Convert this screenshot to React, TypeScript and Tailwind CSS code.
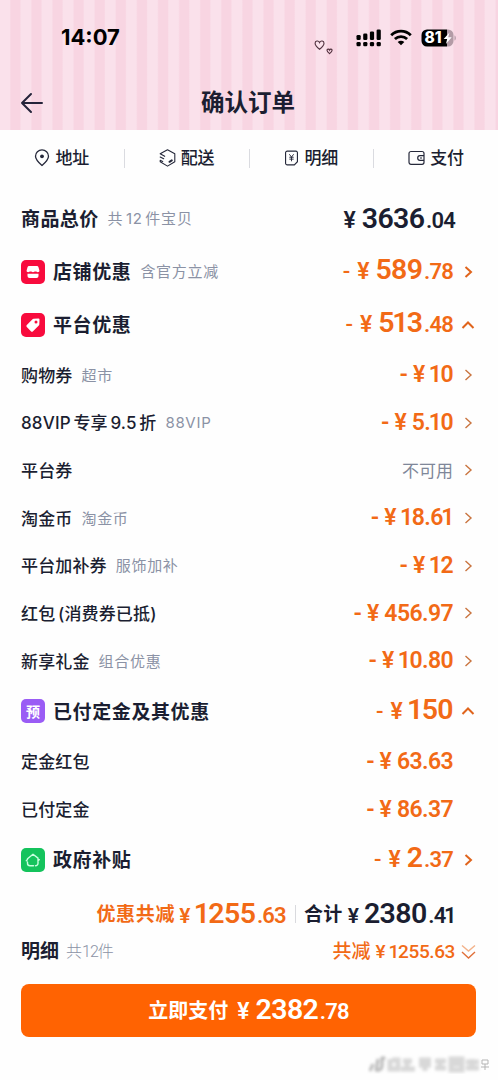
import type { ReactNode } from "react";
import clsx from "clsx";

type Arrow = "right" | "up" | "none";

interface Item {
  label: string;
  note?: string;
  amount?: string;
  arrow: Arrow;
}

const coupons: Item[] = [
  { label: "购物券", note: "超市", amount: "10", arrow: "right" },
  { label: "88VIP 专享 9.5 折", note: "88VIP", amount: "5.10", arrow: "right" },
  { label: "平台券", arrow: "right" },
  { label: "淘金币", note: "淘金币", amount: "18.61", arrow: "right" },
  { label: "平台加补券", note: "服饰加补", amount: "12", arrow: "right" },
  { label: "红包 (消费券已抵)", amount: "456.97", arrow: "right" },
  { label: "新享礼金", note: "组合优惠", amount: "10.80", arrow: "right" },
];

const deposits: Item[] = [
  { label: "定金红包", amount: "63.63", arrow: "none" },
  { label: "已付定金", amount: "86.37", arrow: "none" },
];

function Chevron({ arrow, bold }: { arrow: Arrow; bold?: boolean }) {
  return (
    <span className="ml-[7px] flex w-4 shrink-0 justify-center">
      {arrow !== "none" && (
        <svg width="16" height="16" viewBox="0 0 16 16" fill="none" stroke={bold ? "#e0641c" : "#c9743f"} strokeWidth={bold ? 2 : 1.4}>
          {arrow === "right" ? <path d="M5.500 3l5.500 5-5.500 5" /> : <path d="M2.500 11L8 5.500l5.500 5.500" />}
        </svg>
      )}
    </span>
  );
}

// Proportional figures: the "1" takes less room than the other digits
function Digits({ value }: { value: string }) {
  return value.split("").map((char, i) => (
    <span key={i} className={char === "1" ? "-ml-[0.06em] -mr-[0.04em]" : undefined}>
      {char}
    </span>
  ));
}

interface PriceProps {
  value: string;
  minus?: boolean;
  tight?: boolean;
  className?: string;
}

// Large integer part followed by smaller decimals
function Price({ value, minus, tight, className }: PriceProps) {
  const [whole, cents] = value.split(".");
  return (
    <span className={clsx("flex items-baseline whitespace-nowrap font-['Roboto',sans-serif] font-semibold leading-none", className)}>
      {minus && <span className="mr-[7px] text-[22px] font-medium">-</span>}
      <span className={tight ? "mr-[5px] text-[21px]" : "mr-[6px] text-[23px]"}>¥</span>
      <span className="text-[28.500px] tracking-[-0.6px]">
        <Digits value={whole} />
      </span>
      {cents && (
        <span className="ml-[1.5px] text-[22px] tracking-[-0.8px]">
          .<Digits value={cents} />
        </span>
      )}
    </span>
  );
}

function SectionRow({ icon, label, note, amount, arrow }: Item & { icon: ReactNode }) {
  return (
    <div className="flex h-[53px] items-center">
      {icon}
      <span className="ml-2 pt-[3px] text-[19px] font-bold tracking-[0.6px]">{label}</span>
      {note && <span className="ml-[9px] pt-[2px] text-[15px] tracking-[0.7px] text-[#8b92a5]">{note}</span>}
      <Price value={amount ?? ""} minus className="ml-auto pb-[2px] text-[#f26a16]" />
      <Chevron arrow={arrow} bold />
    </div>
  );
}

function ItemRow({ label, note, amount, arrow }: Item) {
  return (
    <div className="flex h-[47.7px] items-center">
      <span className="pt-[3px] text-[17px] font-medium tracking-[0.15px] [word-spacing:-2px]">{label}</span>
      {note && <span className="ml-[9px] pt-[2px] text-[15px] tracking-[0.7px] text-[#8b92a5]">{note}</span>}
      {amount ? (
        <span className="ml-auto flex items-baseline font-['Roboto',sans-serif] text-[23px] font-semibold leading-none text-[#f26a16]">
          <span className="mr-[5px]">-</span>
          <span className="mr-[5px]">¥</span>
          <span className="tracking-[-0.6px]">
            <Digits value={amount} />
          </span>
        </span>
      ) : (
        <span className="ml-auto pt-[3px] text-[17px] text-[#7f8799]">不可用</span>
      )}
      <Chevron arrow={arrow} />
    </div>
  );
}

function StatusBar() {
  return (
    <div className="flex h-[75px] items-center pl-[61px] pr-[41px]">
      <span className="font-['Inter',sans-serif] text-[22px] font-bold text-black">14:07</span>
      <svg className="ml-auto mt-[18px]" width="20" height="16" viewBox="0 0 18 14" fill="none" stroke="#51323f" strokeWidth="1">
        <path d="M5 9C2.500 7 1 5.500 1 3.600 1 1.300 4 .8 5 3c1-2.200 4-1.700 4 .6C9 5.500 7.500 7 5 9z" />
        <path d="M14 13c-1.500-1.200-2.300-2-2.300-3 0-1.400 1.800-1.500 2.300-.3.500-1.200 2.300-1.100 2.300.3 0 1-.8 1.800-2.300 3z" />
      </svg>
      <svg className="ml-[22px]" width="26" height="18" viewBox="0 0 26 18" fill="#000">
        <rect x="0.500" y="6" width="4.200" height="5" rx="1.300" />
        <rect x="7.200" y="4.500" width="4.200" height="6.500" rx="1.300" />
        <rect x="13.900" y="2.500" width="4.200" height="8.500" rx="1.300" />
        <rect x="20.600" y="0.500" width="4.200" height="10.500" rx="1.300" />
        <rect x="0.500" y="13" width="4.200" height="4.200" rx="1.300" />
        <rect x="7.200" y="13" width="4.200" height="4.200" rx="1.300" />
        <rect x="13.900" y="13" width="4.200" height="4.200" rx="1.300" />
        <rect x="20.600" y="13" width="4.200" height="4.200" rx="1.300" />
      </svg>
      <svg className="ml-2" width="22" height="17" viewBox="0 0 22 17" fill="none" stroke="#000" strokeWidth="2.800">
        <path d="M1.200 6.200c5.600-5.400 14-5.400 19.600 0" />
        <path d="M4.900 10c3.500-3.200 8.700-3.200 12.200 0" />
        <path d="M11 16.300l-3.300-3.400c1.900-1.600 4.700-1.600 6.600 0z" fill="#000" stroke="none" />
      </svg>
      <svg className="ml-[9px]" width="36" height="18" viewBox="0 0 36 18">
        <path d="M6 .5h20v17H6a5.500 5.500 0 0 1-5.500-5.500V6A5.500 5.500 0 0 1 6 .5z" fill="#000" />
        <path d="M26 .5h1A5.500 5.500 0 0 1 32.500 6v6a5.500 5.500 0 0 1-5.500 5.500h-1z" fill="#b39ba6" />
        <path d="M33.500 6.500c1.800.6 1.800 4.400 0 5z" fill="#b39ba6" />
        <text x="3.500" y="14.300" fontSize="15.500" fontWeight="800" fontFamily="Inter, sans-serif" fill="#fff">
          81
        </text>
        <path d="M28.500 3.500l-5.800 6.500h3.500l-1.300 5 5.800-6.700h-3.500z" fill="#fff" />
      </svg>
    </div>
  );
}

function Tab({ icon, label }: { icon: ReactNode; label: string }) {
  return (
    <div className="flex flex-1 items-center justify-center gap-[5px] text-[17px] font-medium">
      {icon}
      <span className="pt-[2px]">{label}</span>
    </div>
  );
}

function Divider() {
  return <span className="h-[19px] w-px bg-[#dadbe0]" />;
}

const badge = "flex size-6 shrink-0 items-center justify-center rounded-[5px]";

export default function App() {
  return (
    <div className="flex h-[1080px] w-[498px] flex-col overflow-hidden bg-[#fefefe] font-['Inter','Noto_Sans_CJK_SC',sans-serif] text-[#1b1e31]">
      <header className="h-[130px] shrink-0 bg-[repeating-linear-gradient(90deg,#fae1eb_0px,#fae1eb_9.500px,#f8d5e2_11px,#f8d5e2_19.800px,#fae1eb_21.100px)]">
        <StatusBar />
        <div className="flex h-[55px] items-center px-[20px]">
          <svg width="24" height="22" viewBox="0 0 24 22" fill="none" stroke="#25243a" strokeWidth="2" strokeLinecap="round" strokeLinejoin="round">
            <path d="M22 11H2M11 2L2 11l9 9" />
          </svg>
          <h1 className="flex-1 pr-[26px] pt-px text-center text-[23.500px] font-bold">确认订单</h1>
        </div>
      </header>

      <nav className="flex h-[56px] shrink-0 items-center">
        <Tab
          label="地址"
          icon={
            <svg width="16" height="18" viewBox="0 0 16 18" fill="none" stroke="#25283a" strokeWidth="1.300">
              <path d="M8 16.500C4 13 1.500 10.300 1.500 7.200a6.500 6.300 0 0 1 13 0c0 3.100-2.500 5.800-6.500 9.300z" />
              <circle cx="8" cy="7.300" r="1.900" fill="#25283a" stroke="none" />
            </svg>
          }
        />
        <Divider />
        <Tab
          label="配送"
          icon={
            <svg width="17" height="18" viewBox="0 0 17 18" fill="none" stroke="#25283a" strokeWidth="1.100" strokeLinejoin="round" strokeLinecap="round">
              <path d="M1.200 4.800l7.300-4 7.300 4v8l-7.300 4.300-7.300-4.300v-1M1.200 4.800l4.500 2.500M1.200 8l3.500 1.800M1.200 11.300l2.500 1.200" />
              <path d="M10.500 12.800l2.300-1.400" strokeWidth="2" />
            </svg>
          }
        />
        <Divider />
        <Tab
          label="明细"
          icon={
            <svg width="15" height="16" viewBox="0 0 15 17" fill="none" stroke="#25283a" strokeWidth="1.200">
              <path d="M3 1.200h9.200a1.600 1.600 0 0 1 1.600 1.600v9.700l-3.300 3.300H3a1.800 1.800 0 0 1-1.800-1.800V3A1.800 1.800 0 0 1 3 1.200z" />
              <path d="M5.200 4.500l2.300 3 2.300-3M7.500 7.500V12M5.200 7.700h4.600M5.200 9.700h4.600" strokeWidth="1" />
            </svg>
          }
        />
        <Divider />
        <Tab
          label="支付"
          icon={
            <svg width="17" height="16" viewBox="0 0 17 16" fill="none" stroke="#25283a" strokeWidth="1.200">
              <rect x="1" y="1.500" width="15" height="12.800" rx="2" />
              <path d="M16 5.700h-4a2.300 2.300 0 0 0 0 4.600h4M12 8h2" />
            </svg>
          }
        />
      </nav>

      <main className="flex flex-col pl-[21px] pr-[22px] pt-[6px]">
        <div className="flex h-[53px] items-center">
          <span className="pt-[3px] text-[19px] font-bold tracking-[0.4px]">商品总价</span>
          <span className="ml-[9px] pt-[2px] text-[15px] tracking-[0.8px] text-[#8b92a5] [word-spacing:-2.500px]">共 12 件宝贝</span>
          <Price value="3636.04" className="ml-auto mr-[21px] pt-px" />
        </div>

        <SectionRow
          label="店铺优惠"
          note="含官方立减"
          amount="589.78"
          arrow="right"
          icon={
            <span className={clsx(badge, "bg-[#f80b3d]")}>
              <svg width="14" height="14" viewBox="0 0 14 14" fill="#fff">
                <path d="M3 1h8a1.500 1.500 0 0 1 1.400 1l1 3.500c.2 1-.6 1.700-1.600 1.700-.9 0-1.300-.7-2.400-.7s-1.300.7-2.400.7-1.300-.7-2.400-.7-1.500.7-2.400.7C1.200 7.200.400 6.500.600 5.500L1.600 2A1.500 1.500 0 0 1 3 1z" />
                <path d="M1.500 8.700h11V11a2 2 0 0 1-2 2h-7a2 2 0 0 1-2-2z" />
              </svg>
            </span>
          }
        />
        <SectionRow
          label="平台优惠"
          amount="513.48"
          arrow="up"
          icon={
            <span className={clsx(badge, "bg-[#f80b3d]")}>
              <svg width="16" height="16" viewBox="0 0 16 16" fill="#fff" fillRule="evenodd">
                <path d="M8.500 1.800L13.500 1.500a1 1 0 0 1 1 1L14.300 7.500a1.500 1.500 0 0 1-.5 1L8 14.200a1.500 1.500 0 0 1-2.100 0L1.800 10.100a1.500 1.500 0 0 1 0-2.100L7.500 2.200a1.500 1.500 0 0 1 1-.4zM11 3.500a1.500 1.500 0 1 0 0 3 1.500 1.500 0 0 0 0-3z" />
              </svg>
            </span>
          }
        />

        {coupons.map((item) => (
          <ItemRow key={item.label} {...item} />
        ))}

        <SectionRow
          label="已付定金及其优惠"
          amount="150"
          arrow="up"
          icon={<span className={clsx(badge, "bg-[#9a5cf5] text-[14px] font-bold text-white")}>预</span>}
        />
        {deposits.map((item) => (
          <ItemRow key={item.label} {...item} />
        ))}

        <SectionRow
          label="政府补贴"
          amount="2.37"
          arrow="right"
          icon={
            <span className={clsx(badge, "bg-[#14c35c]")}>
              <svg width="16" height="16" viewBox="0 0 16 16" fill="none" stroke="#c9ffe0" strokeWidth="1.400" strokeLinecap="round" strokeLinejoin="round">
                <path d="M2.500 7.500V6.800L8 2.200l5 3.900v2.500l1.300-.9M2.500 7.500L1.300 8.800M2.500 10v1.200a2.500 2.500 0 0 0 2.500 2.500h3.500M10.500 13.700a2.500 2.500 0 0 0 2.500-2.500V8.600" />
              </svg>
            </span>
          }
        />

        <div className="flex h-[56px] items-center justify-end pr-[21px]">
          <span className="mr-[4px] pt-[3px] text-[19px] font-bold tracking-[0.7px] text-[#f26a16]">优惠共减</span>
          <Price value="1255.63" tight className="text-[#f26a16]" />
          <span className="ml-[9px] mr-[8px] h-[18px] w-px bg-[#d9dade]" />
          <span className="mr-[5px] pt-[3px] text-[19px] font-bold tracking-[0.4px]">合计</span>
          <Price value="2380.41" tight />
        </div>

        <div className="flex h-5 items-center">
          <span className="pt-px text-[19px] font-bold">明细</span>
          <span className="ml-[7px] font-['Roboto','Noto_Sans_CJK_SC',sans-serif] text-[16px] font-light text-[#8b92a5]">
            共<span className="tracking-[-1px]">12</span>件
          </span>
          <span className="ml-auto pt-px text-[19px] font-medium text-[#f26a16]">共减</span>
          <span className="ml-[5px] mr-[4px] font-['Roboto',sans-serif] text-[19px] font-medium text-[#f26a16]">¥</span>
          <span className="font-['Roboto',sans-serif] text-[19px] font-medium tracking-[-0.4px] text-[#f26a16]">
            <Digits value="1255.63" />
          </span>
          <svg className="ml-[6px]" width="15" height="16" viewBox="0 0 15 16" fill="none" strokeWidth="1.400">
            <path d="M1 1.500l6.500 5.500L14 1.500" stroke="#f3b28a" />
            <path d="M1 8l6.500 6L14 8" stroke="#e0703a" />
          </svg>
        </div>
      </main>

      <button className="ml-[21px] mt-[21.500px] flex h-[53px] w-[455px] shrink-0 items-center justify-center rounded-[8px] bg-[#ff6302] text-white">
        <span className="mr-[9px] pt-[2px] text-[20px] font-bold">立即支付</span>
        <Price value="2382.78" />
      </button>

      <div className="mt-[17px] flex items-center justify-end pr-[7px]">
        <svg width="124" height="20" viewBox="0 0 124 20" fill="none">
          <defs>
            <filter id="soft" x="-20%" y="-60%" width="140%" height="220%">
              <feGaussianBlur stdDeviation="1.800" />
            </filter>
          </defs>
          <path d="M3 17l3-7M9 17l2-12M15 3v9c0 3-3 5-6 4M15 3l3 2" stroke="#b8b8b8" strokeWidth="3" filter="url(#soft)" />
          <path d="M23 5v10h8V6h-6M36 7h9M40 7v8M34 15h14M52 6h12M52 11h12M58 5v12M68 7h11M73 5v11M68 14h11M84 5h11v11H84zM84 10h11M99 8h13M105 5v11M99 14h13" stroke="#d8d8d8" strokeWidth="5" filter="url(#soft)" />
          <path d="M115 6h6v4h-6zM114 13h8M118 10v6" stroke="#b5b5b5" strokeWidth="1" />
        </svg>
      </div>
    </div>
  );
}
